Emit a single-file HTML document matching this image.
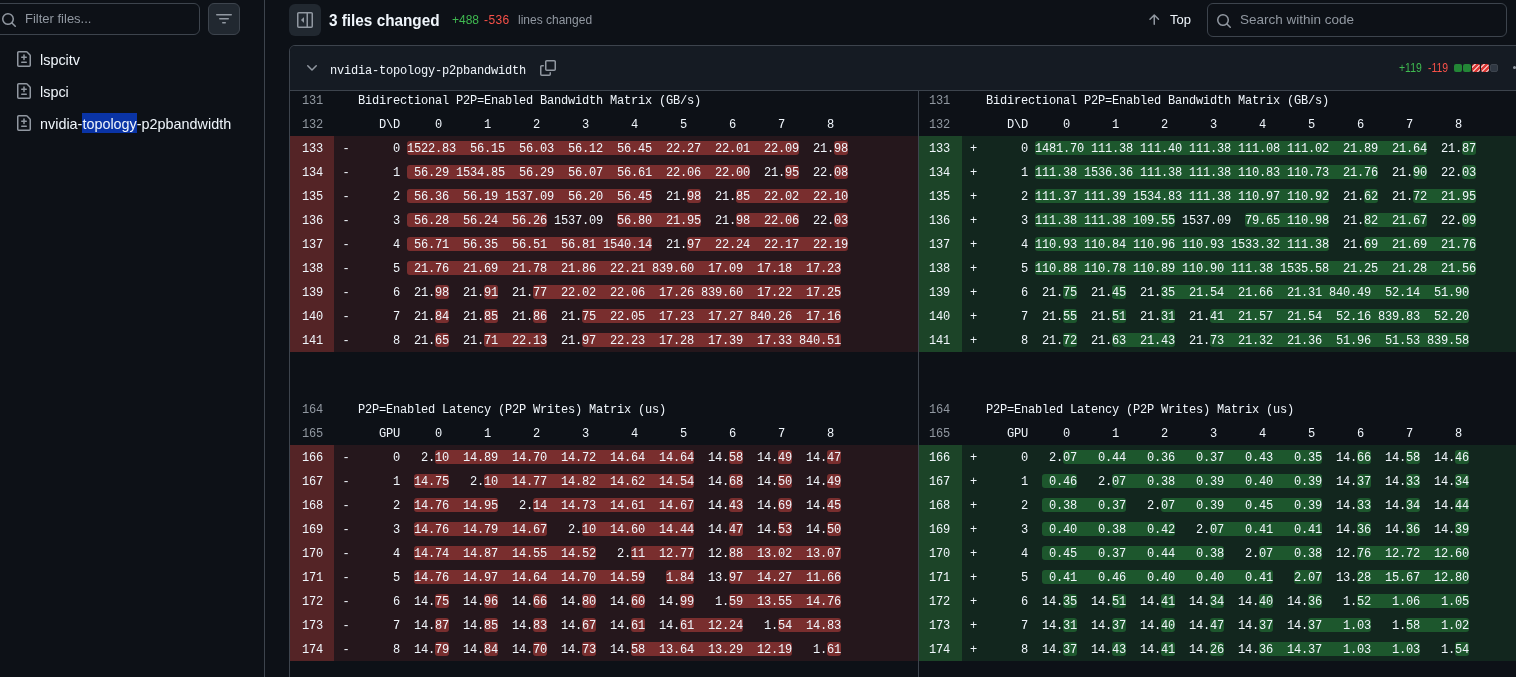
<!DOCTYPE html>
<html><head><meta charset="utf-8">
<style>
html,body{margin:0;padding:0;width:1516px;height:677px;overflow:hidden;background:#0d1117;}
body{position:relative;font-family:"Liberation Sans",sans-serif;color:#f0f6fc;}
.abs{position:absolute;}
svg{position:absolute;display:block;}
.inp{position:absolute;border:1px solid #3d444d;border-radius:6px;box-sizing:border-box;background:#0d1117;}
.btn{position:absolute;border-radius:6px;box-sizing:border-box;background:#212830;}
.sbt{position:absolute;font-size:14.4px;line-height:20px;white-space:nowrap;color:#f0f6fc;}
.ph{position:absolute;font-size:14px;line-height:20px;white-space:nowrap;color:#9198a1;}
.box{position:absolute;left:289px;top:45px;width:1300px;height:700px;border:1px solid #3d444d;border-radius:6px;box-sizing:border-box;overflow:hidden;background:#0d1117;}
.fh{position:absolute;left:290px;top:46px;width:1226px;height:44px;background:#151b23;border-bottom:1px solid #3d444d;border-top-left-radius:5px;z-index:5;}
.sep{position:absolute;left:918px;top:90px;width:1px;height:600px;background:#3d444d;}
.ln,.cl{position:absolute;height:24px;}
.dn{background:#542426;} .dl{background:#25171c;} .dw{background:#792e2e;}
.an{background:#1c4428;} .al{background:#12261e;} .aw{background:#1d572d;}
.hl{position:absolute;height:14px;border-radius:3px;}
.num{position:absolute;height:24px;line-height:24px;text-align:right;font-family:"Liberation Mono",monospace;font-size:12px;letter-spacing:-0.2px;color:#9198a1;white-space:pre;}
.num.chg{color:#f0f6fc;}
.code{position:absolute;height:24px;line-height:24px;font-family:"Liberation Mono",monospace;font-size:12px;letter-spacing:-0.2px;color:#f0f6fc;white-space:pre;}
#wrap{position:absolute;left:0;top:0;width:1516px;height:677px;will-change:transform;}
</style></head><body><div id="wrap">
<!-- sidebar -->
<div class="inp" style="left:-9px;top:3px;width:209px;height:32px;"></div>
<svg style="left:1px;top:12px" width="16" height="16" viewBox="0 0 16 16" fill="#9198a1"><path d="M10.68 11.74a6 6 0 0 1-7.922-8.982 6 6 0 0 1 8.982 7.922l3.04 3.04a.749.749 0 0 1-.326 1.275.749.749 0 0 1-.734-.215ZM11.5 7a4.499 4.499 0 1 0-8.997 0A4.499 4.499 0 0 0 11.5 7Z"/></svg>
<div class="ph" style="left:25px;top:9px;font-size:13px">Filter files...</div>
<div class="btn" style="left:208px;top:3px;width:32px;height:32px;border:1px solid #3d444d"></div>
<svg style="left:216px;top:11px" width="16" height="16" viewBox="0 0 16 16" fill="#9198a1"><path d="M.75 3h14.5a.75.75 0 0 1 0 1.5H.75a.75.75 0 0 1 0-1.5ZM3 7.75A.75.75 0 0 1 3.75 7h8.5a.75.75 0 0 1 0 1.5h-8.5A.75.75 0 0 1 3 7.75Zm3 4a.75.75 0 0 1 .75-.75h2.5a.75.75 0 0 1 0 1.5h-2.5a.75.75 0 0 1-.75-.75Z"/></svg>
<svg style="left:16px;top:51px" width="16" height="16" viewBox="0 0 16 16" fill="#9198a1"><path d="M1 1.75C1 .784 1.784 0 2.75 0h7.586c.464 0 .909.184 1.237.513l2.914 2.914c.329.328.513.773.513 1.237v9.586A1.75 1.75 0 0 1 13.25 16H2.75A1.75 1.75 0 0 1 1 14.25Zm1.75-.25a.25.25 0 0 0-.25.25v12.5c0 .138.112.25.25.25h10.5a.25.25 0 0 0 .25-.25V4.664a.25.25 0 0 0-.073-.177l-2.914-2.914a.25.25 0 0 0-.177-.073ZM8 3.25a.75.75 0 0 1 .75.75v1.5h1.5a.75.75 0 0 1 0 1.5h-1.5v1.5a.75.75 0 0 1-1.5 0V7h-1.5a.75.75 0 0 1 0-1.5h1.5V4A.75.75 0 0 1 8 3.25Zm-3 8a.75.75 0 0 1 .75-.75h4.5a.75.75 0 0 1 0 1.5h-4.5a.75.75 0 0 1-.75-.75Z"/></svg>
<div class="sbt" style="left:40px;top:50px">lspcitv</div>
<svg style="left:16px;top:83px" width="16" height="16" viewBox="0 0 16 16" fill="#9198a1"><path d="M1 1.75C1 .784 1.784 0 2.75 0h7.586c.464 0 .909.184 1.237.513l2.914 2.914c.329.328.513.773.513 1.237v9.586A1.75 1.75 0 0 1 13.25 16H2.75A1.75 1.75 0 0 1 1 14.25Zm1.75-.25a.25.25 0 0 0-.25.25v12.5c0 .138.112.25.25.25h10.5a.25.25 0 0 0 .25-.25V4.664a.25.25 0 0 0-.073-.177l-2.914-2.914a.25.25 0 0 0-.177-.073ZM8 3.25a.75.75 0 0 1 .75.75v1.5h1.5a.75.75 0 0 1 0 1.5h-1.5v1.5a.75.75 0 0 1-1.5 0V7h-1.5a.75.75 0 0 1 0-1.5h1.5V4A.75.75 0 0 1 8 3.25Zm-3 8a.75.75 0 0 1 .75-.75h4.5a.75.75 0 0 1 0 1.5h-4.5a.75.75 0 0 1-.75-.75Z"/></svg>
<div class="sbt" style="left:40px;top:82px">lspci</div>
<svg style="left:16px;top:115px" width="16" height="16" viewBox="0 0 16 16" fill="#9198a1"><path d="M1 1.75C1 .784 1.784 0 2.75 0h7.586c.464 0 .909.184 1.237.513l2.914 2.914c.329.328.513.773.513 1.237v9.586A1.75 1.75 0 0 1 13.25 16H2.75A1.75 1.75 0 0 1 1 14.25Zm1.75-.25a.25.25 0 0 0-.25.25v12.5c0 .138.112.25.25.25h10.5a.25.25 0 0 0 .25-.25V4.664a.25.25 0 0 0-.073-.177l-2.914-2.914a.25.25 0 0 0-.177-.073ZM8 3.25a.75.75 0 0 1 .75.75v1.5h1.5a.75.75 0 0 1 0 1.5h-1.5v1.5a.75.75 0 0 1-1.5 0V7h-1.5a.75.75 0 0 1 0-1.5h1.5V4A.75.75 0 0 1 8 3.25Zm-3 8a.75.75 0 0 1 .75-.75h4.5a.75.75 0 0 1 0 1.5h-4.5a.75.75 0 0 1-.75-.75Z"/></svg>
<div class="abs" style="left:82px;top:113px;width:55px;height:20px;background:#0a34a6"></div>
<div class="sbt" style="left:40px;top:114px">nvidia-topology-p2pbandwidth</div>
<div class="abs" style="left:264px;top:0;width:1px;height:677px;background:#3d444d"></div>

<!-- top bar -->
<div class="btn" style="left:289px;top:4px;width:32px;height:32px;"></div>
<svg style="left:297px;top:12px" width="16" height="16" viewBox="0 0 16 16" fill="#9198a1"><path d="m4.177 7.823 2.396-2.396A.25.25 0 0 1 7 5.604v4.792a.25.25 0 0 1-.427.177L4.177 8.177a.25.25 0 0 1 0-.354Z"/><path d="M0 1.75C0 .784.784 0 1.75 0h12.5C15.216 0 16 .784 16 1.75v12.5A1.75 1.75 0 0 1 14.25 16H1.75A1.75 1.75 0 0 1 0 14.25Zm1.75-.25a.25.25 0 0 0-.25.25v12.5c0 .138.112.25.25.25H9.5v-13Zm12.5 13a.25.25 0 0 0 .25-.25V1.75a.25.25 0 0 0-.25-.25H11v13Z"/></svg>
<div class="abs" style="left:329px;top:9px;font-size:17px;line-height:24px;font-weight:bold;white-space:nowrap;transform:scaleX(0.9);transform-origin:0 0">3 files changed</div>
<div class="abs" style="left:452px;top:11px;font-size:12px;line-height:18px;white-space:nowrap;color:#3fb950">+488</div>
<div class="abs" style="left:484px;top:11px;font-size:12px;line-height:18px;white-space:nowrap;color:#f85149;letter-spacing:0.4px">-536</div>
<div class="abs" style="left:518px;top:11px;font-size:12px;line-height:18px;white-space:nowrap;color:#9198a1">lines changed</div>
<svg style="left:1146px;top:12px" width="16" height="16" viewBox="0 0 16 16" fill="#9198a1"><path d="M3.47 7.78a.75.75 0 0 1 0-1.06l4.25-4.25a.75.75 0 0 1 1.06 0l4.25 4.25a.751.751 0 0 1-.018 1.042.751.751 0 0 1-1.042.018L9 4.81v7.44a.75.75 0 0 1-1.5 0V4.81L4.53 7.78a.75.75 0 0 1-1.06 0Z"/></svg>
<div class="sbt" style="left:1170px;top:10px;font-size:13px">Top</div>
<div class="inp" style="left:1207px;top:3px;width:300px;height:34px;"></div>
<svg style="left:1216px;top:13px" width="16" height="16" viewBox="0 0 16 16" fill="#9198a1"><path d="M10.68 11.74a6 6 0 0 1-7.922-8.982 6 6 0 0 1 8.982 7.922l3.04 3.04a.749.749 0 0 1-.326 1.275.749.749 0 0 1-.734-.215ZM11.5 7a4.499 4.499 0 1 0-8.997 0A4.499 4.499 0 0 0 11.5 7Z"/></svg>
<div class="ph" style="left:1240px;top:10px;font-size:13.5px">Search within code</div>

<!-- diff box -->
<div class="box"></div>
<div class="sep"></div>
<div class="num" style="left:290px;top:89px;width:33px">131</div>
<div class="code" style="left:358px;top:89px">Bidirectional P2P=Enabled Bandwidth Matrix (GB/s)</div>
<div class="num" style="left:290px;top:113px;width:33px">132</div>
<div class="code" style="left:358px;top:113px">   D\D     0      1      2      3      4      5      6      7      8 </div>
<div class="ln dn" style="left:290px;top:136px;width:44px"></div>
<div class="cl dl" style="left:334px;top:136px;width:584px"></div>
<div class="hl dw" style="left:407.0px;top:141px;width:392.0px"></div>
<div class="hl dw" style="left:834.0px;top:141px;width:14.0px"></div>
<div class="num chg" style="left:290px;top:137px;width:33px">133</div>
<div class="code" style="left:342.5px;top:137px">-</div>
<div class="code" style="left:358px;top:137px">     0 1522.83  56.15  56.03  56.12  56.45  22.27  22.01  22.09  21.98 </div>
<div class="ln dn" style="left:290px;top:160px;width:44px"></div>
<div class="cl dl" style="left:334px;top:160px;width:584px"></div>
<div class="hl dw" style="left:407.0px;top:165px;width:343.0px"></div>
<div class="hl dw" style="left:785.0px;top:165px;width:14.0px"></div>
<div class="hl dw" style="left:834.0px;top:165px;width:14.0px"></div>
<div class="num chg" style="left:290px;top:161px;width:33px">134</div>
<div class="code" style="left:342.5px;top:161px">-</div>
<div class="code" style="left:358px;top:161px">     1  56.29 1534.85  56.29  56.07  56.61  22.06  22.00  21.95  22.08 </div>
<div class="ln dn" style="left:290px;top:184px;width:44px"></div>
<div class="cl dl" style="left:334px;top:184px;width:584px"></div>
<div class="hl dw" style="left:407.0px;top:189px;width:245.0px"></div>
<div class="hl dw" style="left:687.0px;top:189px;width:14.0px"></div>
<div class="hl dw" style="left:736.0px;top:189px;width:112.0px"></div>
<div class="num chg" style="left:290px;top:185px;width:33px">135</div>
<div class="code" style="left:342.5px;top:185px">-</div>
<div class="code" style="left:358px;top:185px">     2  56.36  56.19 1537.09  56.20  56.45  21.98  21.85  22.02  22.10 </div>
<div class="ln dn" style="left:290px;top:208px;width:44px"></div>
<div class="cl dl" style="left:334px;top:208px;width:584px"></div>
<div class="hl dw" style="left:407.0px;top:213px;width:140.0px"></div>
<div class="hl dw" style="left:617.0px;top:213px;width:84.0px"></div>
<div class="hl dw" style="left:736.0px;top:213px;width:63.0px"></div>
<div class="hl dw" style="left:834.0px;top:213px;width:14.0px"></div>
<div class="num chg" style="left:290px;top:209px;width:33px">136</div>
<div class="code" style="left:342.5px;top:209px">-</div>
<div class="code" style="left:358px;top:209px">     3  56.28  56.24  56.26 1537.09  56.80  21.95  21.98  22.06  22.03 </div>
<div class="ln dn" style="left:290px;top:232px;width:44px"></div>
<div class="cl dl" style="left:334px;top:232px;width:584px"></div>
<div class="hl dw" style="left:407.0px;top:237px;width:245.0px"></div>
<div class="hl dw" style="left:687.0px;top:237px;width:161.0px"></div>
<div class="num chg" style="left:290px;top:233px;width:33px">137</div>
<div class="code" style="left:342.5px;top:233px">-</div>
<div class="code" style="left:358px;top:233px">     4  56.71  56.35  56.51  56.81 1540.14  21.97  22.24  22.17  22.19 </div>
<div class="ln dn" style="left:290px;top:256px;width:44px"></div>
<div class="cl dl" style="left:334px;top:256px;width:584px"></div>
<div class="hl dw" style="left:407.0px;top:261px;width:434.0px"></div>
<div class="num chg" style="left:290px;top:257px;width:33px">138</div>
<div class="code" style="left:342.5px;top:257px">-</div>
<div class="code" style="left:358px;top:257px">     5  21.76  21.69  21.78  21.86  22.21 839.60  17.09  17.18  17.23 </div>
<div class="ln dn" style="left:290px;top:280px;width:44px"></div>
<div class="cl dl" style="left:334px;top:280px;width:584px"></div>
<div class="hl dw" style="left:435.0px;top:285px;width:14.0px"></div>
<div class="hl dw" style="left:484.0px;top:285px;width:14.0px"></div>
<div class="hl dw" style="left:533.0px;top:285px;width:308.0px"></div>
<div class="num chg" style="left:290px;top:281px;width:33px">139</div>
<div class="code" style="left:342.5px;top:281px">-</div>
<div class="code" style="left:358px;top:281px">     6  21.98  21.91  21.77  22.02  22.06  17.26 839.60  17.22  17.25 </div>
<div class="ln dn" style="left:290px;top:304px;width:44px"></div>
<div class="cl dl" style="left:334px;top:304px;width:584px"></div>
<div class="hl dw" style="left:435.0px;top:309px;width:14.0px"></div>
<div class="hl dw" style="left:484.0px;top:309px;width:14.0px"></div>
<div class="hl dw" style="left:533.0px;top:309px;width:14.0px"></div>
<div class="hl dw" style="left:582.0px;top:309px;width:259.0px"></div>
<div class="num chg" style="left:290px;top:305px;width:33px">140</div>
<div class="code" style="left:342.5px;top:305px">-</div>
<div class="code" style="left:358px;top:305px">     7  21.84  21.85  21.86  21.75  22.05  17.23  17.27 840.26  17.16 </div>
<div class="ln dn" style="left:290px;top:328px;width:44px"></div>
<div class="cl dl" style="left:334px;top:328px;width:584px"></div>
<div class="hl dw" style="left:435.0px;top:333px;width:14.0px"></div>
<div class="hl dw" style="left:484.0px;top:333px;width:63.0px"></div>
<div class="hl dw" style="left:582.0px;top:333px;width:259.0px"></div>
<div class="num chg" style="left:290px;top:329px;width:33px">141</div>
<div class="code" style="left:342.5px;top:329px">-</div>
<div class="code" style="left:358px;top:329px">     8  21.65  21.71  22.13  21.97  22.23  17.28  17.39  17.33 840.51 </div>
<div class="num" style="left:919px;top:89px;width:31px">131</div>
<div class="code" style="left:986px;top:89px">Bidirectional P2P=Enabled Bandwidth Matrix (GB/s)</div>
<div class="num" style="left:919px;top:113px;width:31px">132</div>
<div class="code" style="left:986px;top:113px">   D\D     0      1      2      3      4      5      6      7      8 </div>
<div class="ln an" style="left:919px;top:136px;width:43px"></div>
<div class="cl al" style="left:962px;top:136px;width:600px"></div>
<div class="hl aw" style="left:1035.0px;top:141px;width:392.0px"></div>
<div class="hl aw" style="left:1462.0px;top:141px;width:14.0px"></div>
<div class="num chg" style="left:919px;top:137px;width:31px">133</div>
<div class="code" style="left:970px;top:137px">+</div>
<div class="code" style="left:986px;top:137px">     0 1481.70 111.38 111.40 111.38 111.08 111.02  21.89  21.64  21.87 </div>
<div class="ln an" style="left:919px;top:160px;width:43px"></div>
<div class="cl al" style="left:962px;top:160px;width:600px"></div>
<div class="hl aw" style="left:1035.0px;top:165px;width:343.0px"></div>
<div class="hl aw" style="left:1413.0px;top:165px;width:14.0px"></div>
<div class="hl aw" style="left:1462.0px;top:165px;width:14.0px"></div>
<div class="num chg" style="left:919px;top:161px;width:31px">134</div>
<div class="code" style="left:970px;top:161px">+</div>
<div class="code" style="left:986px;top:161px">     1 111.38 1536.36 111.38 111.38 110.83 110.73  21.76  21.90  22.03 </div>
<div class="ln an" style="left:919px;top:184px;width:43px"></div>
<div class="cl al" style="left:962px;top:184px;width:600px"></div>
<div class="hl aw" style="left:1035.0px;top:189px;width:294.0px"></div>
<div class="hl aw" style="left:1364.0px;top:189px;width:14.0px"></div>
<div class="hl aw" style="left:1413.0px;top:189px;width:63.0px"></div>
<div class="num chg" style="left:919px;top:185px;width:31px">135</div>
<div class="code" style="left:970px;top:185px">+</div>
<div class="code" style="left:986px;top:185px">     2 111.37 111.39 1534.83 111.38 110.97 110.92  21.62  21.72  21.95 </div>
<div class="ln an" style="left:919px;top:208px;width:43px"></div>
<div class="cl al" style="left:962px;top:208px;width:600px"></div>
<div class="hl aw" style="left:1035.0px;top:213px;width:140.0px"></div>
<div class="hl aw" style="left:1245.0px;top:213px;width:84.0px"></div>
<div class="hl aw" style="left:1364.0px;top:213px;width:63.0px"></div>
<div class="hl aw" style="left:1462.0px;top:213px;width:14.0px"></div>
<div class="num chg" style="left:919px;top:209px;width:31px">136</div>
<div class="code" style="left:970px;top:209px">+</div>
<div class="code" style="left:986px;top:209px">     3 111.38 111.38 109.55 1537.09  79.65 110.98  21.82  21.67  22.09 </div>
<div class="ln an" style="left:919px;top:232px;width:43px"></div>
<div class="cl al" style="left:962px;top:232px;width:600px"></div>
<div class="hl aw" style="left:1035.0px;top:237px;width:294.0px"></div>
<div class="hl aw" style="left:1364.0px;top:237px;width:112.0px"></div>
<div class="num chg" style="left:919px;top:233px;width:31px">137</div>
<div class="code" style="left:970px;top:233px">+</div>
<div class="code" style="left:986px;top:233px">     4 110.93 110.84 110.96 110.93 1533.32 111.38  21.69  21.69  21.76 </div>
<div class="ln an" style="left:919px;top:256px;width:43px"></div>
<div class="cl al" style="left:962px;top:256px;width:600px"></div>
<div class="hl aw" style="left:1035.0px;top:261px;width:441.0px"></div>
<div class="num chg" style="left:919px;top:257px;width:31px">138</div>
<div class="code" style="left:970px;top:257px">+</div>
<div class="code" style="left:986px;top:257px">     5 110.88 110.78 110.89 110.90 111.38 1535.58  21.25  21.28  21.56 </div>
<div class="ln an" style="left:919px;top:280px;width:43px"></div>
<div class="cl al" style="left:962px;top:280px;width:600px"></div>
<div class="hl aw" style="left:1063.0px;top:285px;width:14.0px"></div>
<div class="hl aw" style="left:1112.0px;top:285px;width:14.0px"></div>
<div class="hl aw" style="left:1161.0px;top:285px;width:308.0px"></div>
<div class="num chg" style="left:919px;top:281px;width:31px">139</div>
<div class="code" style="left:970px;top:281px">+</div>
<div class="code" style="left:986px;top:281px">     6  21.75  21.45  21.35  21.54  21.66  21.31 840.49  52.14  51.90 </div>
<div class="ln an" style="left:919px;top:304px;width:43px"></div>
<div class="cl al" style="left:962px;top:304px;width:600px"></div>
<div class="hl aw" style="left:1063.0px;top:309px;width:14.0px"></div>
<div class="hl aw" style="left:1112.0px;top:309px;width:14.0px"></div>
<div class="hl aw" style="left:1161.0px;top:309px;width:14.0px"></div>
<div class="hl aw" style="left:1210.0px;top:309px;width:259.0px"></div>
<div class="num chg" style="left:919px;top:305px;width:31px">140</div>
<div class="code" style="left:970px;top:305px">+</div>
<div class="code" style="left:986px;top:305px">     7  21.55  21.51  21.31  21.41  21.57  21.54  52.16 839.83  52.20 </div>
<div class="ln an" style="left:919px;top:328px;width:43px"></div>
<div class="cl al" style="left:962px;top:328px;width:600px"></div>
<div class="hl aw" style="left:1063.0px;top:333px;width:14.0px"></div>
<div class="hl aw" style="left:1112.0px;top:333px;width:63.0px"></div>
<div class="hl aw" style="left:1210.0px;top:333px;width:259.0px"></div>
<div class="num chg" style="left:919px;top:329px;width:31px">141</div>
<div class="code" style="left:970px;top:329px">+</div>
<div class="code" style="left:986px;top:329px">     8  21.72  21.63  21.43  21.73  21.32  21.36  51.96  51.53 839.58 </div>
<div class="num" style="left:290px;top:398px;width:33px">164</div>
<div class="code" style="left:358px;top:398px">P2P=Enabled Latency (P2P Writes) Matrix (us)</div>
<div class="num" style="left:290px;top:422px;width:33px">165</div>
<div class="code" style="left:358px;top:422px">   GPU     0      1      2      3      4      5      6      7      8 </div>
<div class="ln dn" style="left:290px;top:445px;width:44px"></div>
<div class="cl dl" style="left:334px;top:445px;width:584px"></div>
<div class="hl dw" style="left:435.0px;top:450px;width:259.0px"></div>
<div class="hl dw" style="left:729.0px;top:450px;width:14.0px"></div>
<div class="hl dw" style="left:778.0px;top:450px;width:14.0px"></div>
<div class="hl dw" style="left:827.0px;top:450px;width:14.0px"></div>
<div class="num chg" style="left:290px;top:446px;width:33px">166</div>
<div class="code" style="left:342.5px;top:446px">-</div>
<div class="code" style="left:358px;top:446px">     0   2.10  14.89  14.70  14.72  14.64  14.64  14.58  14.49  14.47 </div>
<div class="ln dn" style="left:290px;top:469px;width:44px"></div>
<div class="cl dl" style="left:334px;top:469px;width:584px"></div>
<div class="hl dw" style="left:414.0px;top:474px;width:35.0px"></div>
<div class="hl dw" style="left:484.0px;top:474px;width:210.0px"></div>
<div class="hl dw" style="left:729.0px;top:474px;width:14.0px"></div>
<div class="hl dw" style="left:778.0px;top:474px;width:14.0px"></div>
<div class="hl dw" style="left:827.0px;top:474px;width:14.0px"></div>
<div class="num chg" style="left:290px;top:470px;width:33px">167</div>
<div class="code" style="left:342.5px;top:470px">-</div>
<div class="code" style="left:358px;top:470px">     1  14.75   2.10  14.77  14.82  14.62  14.54  14.68  14.50  14.49 </div>
<div class="ln dn" style="left:290px;top:493px;width:44px"></div>
<div class="cl dl" style="left:334px;top:493px;width:584px"></div>
<div class="hl dw" style="left:414.0px;top:498px;width:84.0px"></div>
<div class="hl dw" style="left:533.0px;top:498px;width:161.0px"></div>
<div class="hl dw" style="left:729.0px;top:498px;width:14.0px"></div>
<div class="hl dw" style="left:778.0px;top:498px;width:14.0px"></div>
<div class="hl dw" style="left:827.0px;top:498px;width:14.0px"></div>
<div class="num chg" style="left:290px;top:494px;width:33px">168</div>
<div class="code" style="left:342.5px;top:494px">-</div>
<div class="code" style="left:358px;top:494px">     2  14.76  14.95   2.14  14.73  14.61  14.67  14.43  14.69  14.45 </div>
<div class="ln dn" style="left:290px;top:517px;width:44px"></div>
<div class="cl dl" style="left:334px;top:517px;width:584px"></div>
<div class="hl dw" style="left:414.0px;top:522px;width:133.0px"></div>
<div class="hl dw" style="left:582.0px;top:522px;width:112.0px"></div>
<div class="hl dw" style="left:729.0px;top:522px;width:14.0px"></div>
<div class="hl dw" style="left:778.0px;top:522px;width:14.0px"></div>
<div class="hl dw" style="left:827.0px;top:522px;width:14.0px"></div>
<div class="num chg" style="left:290px;top:518px;width:33px">169</div>
<div class="code" style="left:342.5px;top:518px">-</div>
<div class="code" style="left:358px;top:518px">     3  14.76  14.79  14.67   2.10  14.60  14.44  14.47  14.53  14.50 </div>
<div class="ln dn" style="left:290px;top:541px;width:44px"></div>
<div class="cl dl" style="left:334px;top:541px;width:584px"></div>
<div class="hl dw" style="left:414.0px;top:546px;width:182.0px"></div>
<div class="hl dw" style="left:631.0px;top:546px;width:63.0px"></div>
<div class="hl dw" style="left:729.0px;top:546px;width:112.0px"></div>
<div class="num chg" style="left:290px;top:542px;width:33px">170</div>
<div class="code" style="left:342.5px;top:542px">-</div>
<div class="code" style="left:358px;top:542px">     4  14.74  14.87  14.55  14.52   2.11  12.77  12.88  13.02  13.07 </div>
<div class="ln dn" style="left:290px;top:565px;width:44px"></div>
<div class="cl dl" style="left:334px;top:565px;width:584px"></div>
<div class="hl dw" style="left:414.0px;top:570px;width:231.0px"></div>
<div class="hl dw" style="left:666.0px;top:570px;width:28.0px"></div>
<div class="hl dw" style="left:729.0px;top:570px;width:112.0px"></div>
<div class="num chg" style="left:290px;top:566px;width:33px">171</div>
<div class="code" style="left:342.5px;top:566px">-</div>
<div class="code" style="left:358px;top:566px">     5  14.76  14.97  14.64  14.70  14.59   1.84  13.97  14.27  11.66 </div>
<div class="ln dn" style="left:290px;top:589px;width:44px"></div>
<div class="cl dl" style="left:334px;top:589px;width:584px"></div>
<div class="hl dw" style="left:435.0px;top:594px;width:14.0px"></div>
<div class="hl dw" style="left:484.0px;top:594px;width:14.0px"></div>
<div class="hl dw" style="left:533.0px;top:594px;width:14.0px"></div>
<div class="hl dw" style="left:582.0px;top:594px;width:14.0px"></div>
<div class="hl dw" style="left:631.0px;top:594px;width:14.0px"></div>
<div class="hl dw" style="left:680.0px;top:594px;width:14.0px"></div>
<div class="hl dw" style="left:729.0px;top:594px;width:112.0px"></div>
<div class="num chg" style="left:290px;top:590px;width:33px">172</div>
<div class="code" style="left:342.5px;top:590px">-</div>
<div class="code" style="left:358px;top:590px">     6  14.75  14.96  14.66  14.80  14.60  14.99   1.59  13.55  14.76 </div>
<div class="ln dn" style="left:290px;top:613px;width:44px"></div>
<div class="cl dl" style="left:334px;top:613px;width:584px"></div>
<div class="hl dw" style="left:435.0px;top:618px;width:14.0px"></div>
<div class="hl dw" style="left:484.0px;top:618px;width:14.0px"></div>
<div class="hl dw" style="left:533.0px;top:618px;width:14.0px"></div>
<div class="hl dw" style="left:582.0px;top:618px;width:14.0px"></div>
<div class="hl dw" style="left:631.0px;top:618px;width:14.0px"></div>
<div class="hl dw" style="left:680.0px;top:618px;width:63.0px"></div>
<div class="hl dw" style="left:778.0px;top:618px;width:63.0px"></div>
<div class="num chg" style="left:290px;top:614px;width:33px">173</div>
<div class="code" style="left:342.5px;top:614px">-</div>
<div class="code" style="left:358px;top:614px">     7  14.87  14.85  14.83  14.67  14.61  14.61  12.24   1.54  14.83 </div>
<div class="ln dn" style="left:290px;top:637px;width:44px"></div>
<div class="cl dl" style="left:334px;top:637px;width:584px"></div>
<div class="hl dw" style="left:435.0px;top:642px;width:14.0px"></div>
<div class="hl dw" style="left:484.0px;top:642px;width:14.0px"></div>
<div class="hl dw" style="left:533.0px;top:642px;width:14.0px"></div>
<div class="hl dw" style="left:582.0px;top:642px;width:14.0px"></div>
<div class="hl dw" style="left:631.0px;top:642px;width:161.0px"></div>
<div class="hl dw" style="left:827.0px;top:642px;width:14.0px"></div>
<div class="num chg" style="left:290px;top:638px;width:33px">174</div>
<div class="code" style="left:342.5px;top:638px">-</div>
<div class="code" style="left:358px;top:638px">     8  14.79  14.84  14.70  14.73  14.58  13.64  13.29  12.19   1.61 </div>
<div class="num" style="left:919px;top:398px;width:31px">164</div>
<div class="code" style="left:986px;top:398px">P2P=Enabled Latency (P2P Writes) Matrix (us)</div>
<div class="num" style="left:919px;top:422px;width:31px">165</div>
<div class="code" style="left:986px;top:422px">   GPU     0      1      2      3      4      5      6      7      8 </div>
<div class="ln an" style="left:919px;top:445px;width:43px"></div>
<div class="cl al" style="left:962px;top:445px;width:600px"></div>
<div class="hl aw" style="left:1063.0px;top:450px;width:259.0px"></div>
<div class="hl aw" style="left:1357.0px;top:450px;width:14.0px"></div>
<div class="hl aw" style="left:1406.0px;top:450px;width:14.0px"></div>
<div class="hl aw" style="left:1455.0px;top:450px;width:14.0px"></div>
<div class="num chg" style="left:919px;top:446px;width:31px">166</div>
<div class="code" style="left:970px;top:446px">+</div>
<div class="code" style="left:986px;top:446px">     0   2.07   0.44   0.36   0.37   0.43   0.35  14.66  14.58  14.46 </div>
<div class="ln an" style="left:919px;top:469px;width:43px"></div>
<div class="cl al" style="left:962px;top:469px;width:600px"></div>
<div class="hl aw" style="left:1042.0px;top:474px;width:35.0px"></div>
<div class="hl aw" style="left:1112.0px;top:474px;width:210.0px"></div>
<div class="hl aw" style="left:1357.0px;top:474px;width:14.0px"></div>
<div class="hl aw" style="left:1406.0px;top:474px;width:14.0px"></div>
<div class="hl aw" style="left:1455.0px;top:474px;width:14.0px"></div>
<div class="num chg" style="left:919px;top:470px;width:31px">167</div>
<div class="code" style="left:970px;top:470px">+</div>
<div class="code" style="left:986px;top:470px">     1   0.46   2.07   0.38   0.39   0.40   0.39  14.37  14.33  14.34 </div>
<div class="ln an" style="left:919px;top:493px;width:43px"></div>
<div class="cl al" style="left:962px;top:493px;width:600px"></div>
<div class="hl aw" style="left:1042.0px;top:498px;width:84.0px"></div>
<div class="hl aw" style="left:1161.0px;top:498px;width:161.0px"></div>
<div class="hl aw" style="left:1357.0px;top:498px;width:14.0px"></div>
<div class="hl aw" style="left:1406.0px;top:498px;width:14.0px"></div>
<div class="hl aw" style="left:1455.0px;top:498px;width:14.0px"></div>
<div class="num chg" style="left:919px;top:494px;width:31px">168</div>
<div class="code" style="left:970px;top:494px">+</div>
<div class="code" style="left:986px;top:494px">     2   0.38   0.37   2.07   0.39   0.45   0.39  14.33  14.34  14.44 </div>
<div class="ln an" style="left:919px;top:517px;width:43px"></div>
<div class="cl al" style="left:962px;top:517px;width:600px"></div>
<div class="hl aw" style="left:1042.0px;top:522px;width:133.0px"></div>
<div class="hl aw" style="left:1210.0px;top:522px;width:112.0px"></div>
<div class="hl aw" style="left:1357.0px;top:522px;width:14.0px"></div>
<div class="hl aw" style="left:1406.0px;top:522px;width:14.0px"></div>
<div class="hl aw" style="left:1455.0px;top:522px;width:14.0px"></div>
<div class="num chg" style="left:919px;top:518px;width:31px">169</div>
<div class="code" style="left:970px;top:518px">+</div>
<div class="code" style="left:986px;top:518px">     3   0.40   0.38   0.42   2.07   0.41   0.41  14.36  14.36  14.39 </div>
<div class="ln an" style="left:919px;top:541px;width:43px"></div>
<div class="cl al" style="left:962px;top:541px;width:600px"></div>
<div class="hl aw" style="left:1042.0px;top:546px;width:182.0px"></div>
<div class="hl aw" style="left:1259.0px;top:546px;width:63.0px"></div>
<div class="hl aw" style="left:1357.0px;top:546px;width:112.0px"></div>
<div class="num chg" style="left:919px;top:542px;width:31px">170</div>
<div class="code" style="left:970px;top:542px">+</div>
<div class="code" style="left:986px;top:542px">     4   0.45   0.37   0.44   0.38   2.07   0.38  12.76  12.72  12.60 </div>
<div class="ln an" style="left:919px;top:565px;width:43px"></div>
<div class="cl al" style="left:962px;top:565px;width:600px"></div>
<div class="hl aw" style="left:1042.0px;top:570px;width:231.0px"></div>
<div class="hl aw" style="left:1294.0px;top:570px;width:28.0px"></div>
<div class="hl aw" style="left:1357.0px;top:570px;width:112.0px"></div>
<div class="num chg" style="left:919px;top:566px;width:31px">171</div>
<div class="code" style="left:970px;top:566px">+</div>
<div class="code" style="left:986px;top:566px">     5   0.41   0.46   0.40   0.40   0.41   2.07  13.28  15.67  12.80 </div>
<div class="ln an" style="left:919px;top:589px;width:43px"></div>
<div class="cl al" style="left:962px;top:589px;width:600px"></div>
<div class="hl aw" style="left:1063.0px;top:594px;width:14.0px"></div>
<div class="hl aw" style="left:1112.0px;top:594px;width:14.0px"></div>
<div class="hl aw" style="left:1161.0px;top:594px;width:14.0px"></div>
<div class="hl aw" style="left:1210.0px;top:594px;width:14.0px"></div>
<div class="hl aw" style="left:1259.0px;top:594px;width:14.0px"></div>
<div class="hl aw" style="left:1308.0px;top:594px;width:14.0px"></div>
<div class="hl aw" style="left:1357.0px;top:594px;width:112.0px"></div>
<div class="num chg" style="left:919px;top:590px;width:31px">172</div>
<div class="code" style="left:970px;top:590px">+</div>
<div class="code" style="left:986px;top:590px">     6  14.35  14.51  14.41  14.34  14.40  14.36   1.52   1.06   1.05 </div>
<div class="ln an" style="left:919px;top:613px;width:43px"></div>
<div class="cl al" style="left:962px;top:613px;width:600px"></div>
<div class="hl aw" style="left:1063.0px;top:618px;width:14.0px"></div>
<div class="hl aw" style="left:1112.0px;top:618px;width:14.0px"></div>
<div class="hl aw" style="left:1161.0px;top:618px;width:14.0px"></div>
<div class="hl aw" style="left:1210.0px;top:618px;width:14.0px"></div>
<div class="hl aw" style="left:1259.0px;top:618px;width:14.0px"></div>
<div class="hl aw" style="left:1308.0px;top:618px;width:63.0px"></div>
<div class="hl aw" style="left:1406.0px;top:618px;width:63.0px"></div>
<div class="num chg" style="left:919px;top:614px;width:31px">173</div>
<div class="code" style="left:970px;top:614px">+</div>
<div class="code" style="left:986px;top:614px">     7  14.31  14.37  14.40  14.47  14.37  14.37   1.03   1.58   1.02 </div>
<div class="ln an" style="left:919px;top:637px;width:43px"></div>
<div class="cl al" style="left:962px;top:637px;width:600px"></div>
<div class="hl aw" style="left:1063.0px;top:642px;width:14.0px"></div>
<div class="hl aw" style="left:1112.0px;top:642px;width:14.0px"></div>
<div class="hl aw" style="left:1161.0px;top:642px;width:14.0px"></div>
<div class="hl aw" style="left:1210.0px;top:642px;width:14.0px"></div>
<div class="hl aw" style="left:1259.0px;top:642px;width:161.0px"></div>
<div class="hl aw" style="left:1455.0px;top:642px;width:14.0px"></div>
<div class="num chg" style="left:919px;top:638px;width:31px">174</div>
<div class="code" style="left:970px;top:638px">+</div>
<div class="code" style="left:986px;top:638px">     8  14.37  14.43  14.41  14.26  14.36  14.37   1.03   1.03   1.54 </div>
<div class="fh"></div>
<svg style="left:304px;top:60px;z-index:6" width="16" height="16" viewBox="0 0 16 16" fill="#9198a1"><path d="M12.78 5.22a.749.749 0 0 1 0 1.06l-4.25 4.25a.749.749 0 0 1-1.06 0L3.22 6.28a.749.749 0 1 1 1.06-1.06L8 8.939l3.72-3.719a.749.749 0 0 1 1.06 0Z"/></svg>
<div class="code" style="left:330px;top:58.5px;z-index:6">nvidia-topology-p2pbandwidth</div>
<svg style="left:540px;top:60px;z-index:6" width="16" height="16" viewBox="0 0 16 16" fill="#9198a1"><path d="M0 6.75C0 5.784.784 5 1.75 5h1.5a.75.75 0 0 1 0 1.5h-1.5a.25.25 0 0 0-.25.25v7.5c0 .138.112.25.25.25h7.5a.25.25 0 0 0 .25-.25v-1.5a.75.75 0 0 1 1.5 0v1.5A1.75 1.75 0 0 1 9.25 16h-7.5A1.75 1.75 0 0 1 0 14.25Z"/><path d="M5 1.75C5 .784 5.784 0 6.75 0h7.5C15.216 0 16 .784 16 1.75v7.5A1.75 1.75 0 0 1 14.25 11h-7.5A1.75 1.75 0 0 1 5 9.25Zm1.75-.25a.25.25 0 0 0-.25.25v7.5c0 .138.112.25.25.25h7.5a.25.25 0 0 0 .25-.25v-7.5a.25.25 0 0 0-.25-.25Z"/></svg>
<div class="abs" style="left:1399px;top:59px;font-size:12px;line-height:18px;white-space:nowrap;z-index:6;color:#3fb950;transform:scaleX(0.87);transform-origin:0 0">+119</div>
<div class="abs" style="left:1428px;top:59px;font-size:12px;line-height:18px;white-space:nowrap;z-index:6;color:#f85149;transform:scaleX(0.87);transform-origin:0 0">-119</div>
<div class="abs" style="left:1454px;top:64px;z-index:6;width:8px;height:8px;border-radius:2px;background:#238636"></div>
<div class="abs" style="left:1463px;top:64px;z-index:6;width:8px;height:8px;border-radius:2px;background:#238636"></div>
<div class="abs" style="left:1472px;top:64px;z-index:6;width:8px;height:8px;border-radius:2px;background:repeating-linear-gradient(135deg,#da3633 0,#da3633 2px,#f0b0ae 2px,#f0b0ae 3.4px)"></div>
<div class="abs" style="left:1481px;top:64px;z-index:6;width:8px;height:8px;border-radius:2px;background:repeating-linear-gradient(135deg,#da3633 0,#da3633 2px,#f0b0ae 2px,#f0b0ae 3.4px)"></div>
<div class="abs" style="left:1490px;top:64px;z-index:6;width:8px;height:8px;border-radius:2px;background:#2f3742;box-sizing:border-box;border:1px solid #3d444d"></div>
<div class="abs" style="left:1513px;top:66px;z-index:6;width:3px;height:3px;border-radius:2px;background:#9198a1"></div>
</div></body></html>
